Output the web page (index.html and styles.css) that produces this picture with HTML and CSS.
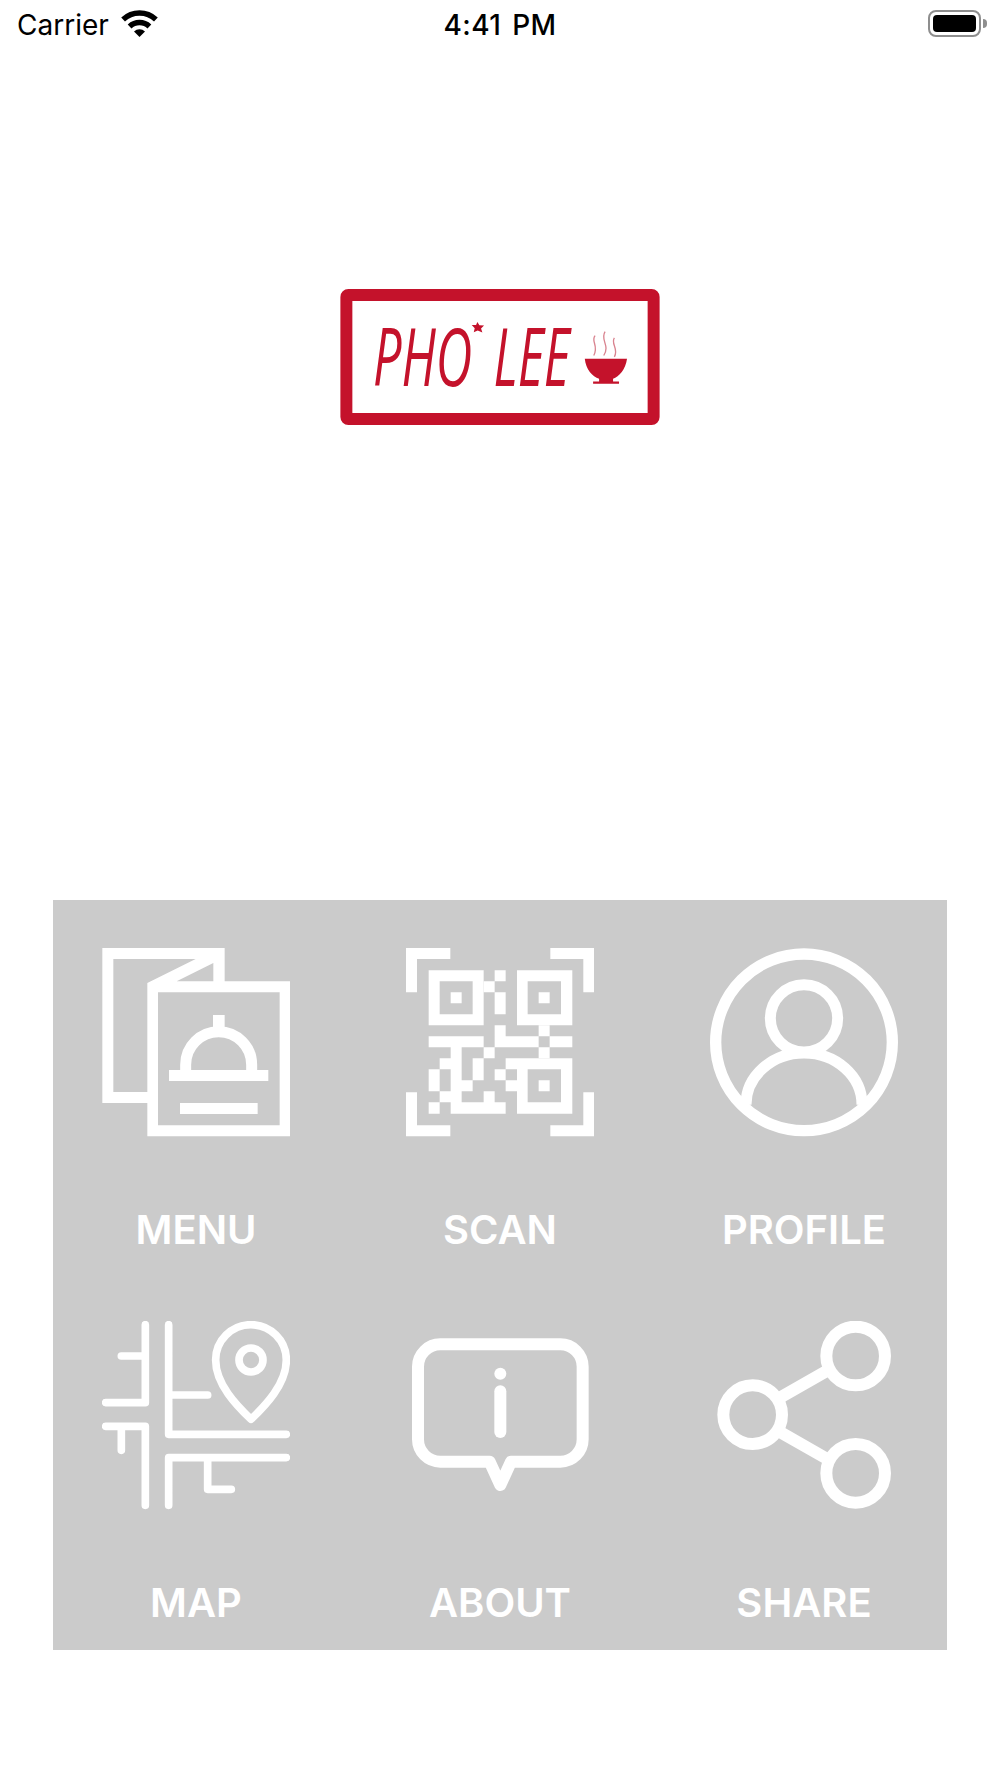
FILE: index.html
```html
<!DOCTYPE html>
<html lang="en">
<head>
<meta charset="utf-8">
<title>Pho Lee</title>
<link rel="stylesheet" href="styles.css">
</head>
<body>
<div class="page">
  <header class="status">
    <div class="status-left">
      <span class="carrier">Carrier</span>
      <svg class="wifi" viewBox="0 0 37 27"><path class="wifi-arc" d="M2.1 9.5A24 24 0 0 1 34.9 9.5"/><path class="wifi-arc" d="M8.6 16.4A14.5 14.5 0 0 1 28.4 16.4"/><path class="wifi-dot" d="M18.5 27L13 21.5A8 8 0 0 1 24 21.5Z"/></svg>
    </div>
    <span class="time">4:41 PM</span>
    <div class="battery"><div class="battery-body"><div class="battery-fill"></div></div><div class="battery-tip"></div></div>
  </header>

  <section class="hero">
    <svg class="logo" viewBox="60 58 960 409">
      <rect class="logo-frame" x="78" y="76" width="924" height="373" rx="6"/>
      <text class="logo-text" x="158" y="349" textLength="592" lengthAdjust="spacingAndGlyphs">PHO LEE</text>
      <path class="logo-fill" d="M472 157l6 10 14 1-9 9 4 12-14-6-12 5 3-12-9-10 13 0z"/>
      <path class="logo-fill" d="M795 268H922C918 300 898 322 880 328V336H898V343H820V336H838V328C818 322 798 300 795 268Z"/>
      <path class="logo-steam" d="M826 198C812 215 838 228 822 258M856 186C840 210 872 228 852 258M884 205C872 222 898 238 884 262"/>
    </svg>
  </section>

  <nav class="panel">
    <a class="tile">
      <svg class="icon" viewBox="64 55 566 566">
        <path class="solid" fill-rule="evenodd" d="M65 55H432V155H630V620H200V520H65ZM98 88H345L200 160V487H98ZM398 100V155H288ZM232 188H597V587H232Z"/>
        <path class="line" stroke-width="33" d="M315 421V405A99 99 0 0 1 513 405V421"/>
        <path class="solid" d="M397 256H432V300H397ZM265 421H563V454H265ZM298 520H531V553H298Z"/>
      </svg>
      <span class="label">MENU</span>
    </a>
    <a class="tile">
      <svg class="icon" viewBox="47 55 566 566">
        <path class="solid" d="M47 55H180V88H80V188H47ZM480 55H612V188H579V88H480ZM47 488H80V587H180V620H47ZM579 488H612V620H480V587H579Z"/>
        <path class="solid" fill-rule="evenodd" d="M115 122h165v165h-165zM148 155v99h99v-99zM181 188h33v33h-33zM380 122h166v165h-166zM412 155v99h100v-99zM445 188h33v33h-33zM380 386h166v166h-166zM412 419v99h100v-99zM445 452h33v33h-33z"/>
        <path class="solid" d="M313 122h33v33h-33zM280 155h33v33h-33zM313 188h33v66h-33zM313 287h33v33h-33zM445 287h33v33h-33zM115 320h165v33h-165zM313 320h132v33h-132zM478 320h68v33h-68zM181 353h33v33h-33zM280 353h33v33h-33zM445 353h33v33h-33zM148 386h66v33h-66zM247 386h33v33h-33zM346 386h34v33h-34zM115 419h33v33h-33zM181 419h33v33h-33zM247 419h33v33h-33zM313 419h33v33h-33zM115 452h33v33h-33zM181 452h66v33h-66zM346 452h34v33h-34zM148 485h66v33h-66zM280 485h33v33h-33zM115 518h33v34h-33zM181 518h165v34h-165z"/>
      </svg>
      <span class="label">SCAN</span>
    </a>
    <a class="tile">
      <svg class="icon" viewBox="60 55 566 566">
        <circle class="line" stroke-width="34" cx="342" cy="338" r="265"/>
        <circle class="line" stroke-width="33" cx="342" cy="266" r="101"/>
        <path class="line" stroke-width="33" d="M168 525A174 155 0 0 1 516 525"/>
      </svg>
      <span class="label">PROFILE</span>
    </a>
    <a class="tile">
      <svg class="icon" viewBox="35 65 566 566">
        <g class="round" stroke-width="23">
          <path d="M165 76V310H46M93 170H165M46 381H165V618M93 381V453M235 76V405H588M235 287H352M588 475H235V618M352 475V570H423"/>
          <path d="M482 360C440 320 376 255 376 182A106 106 0 0 1 588 182C588 255 524 320 482 360Z"/>
          <circle cx="482" cy="182" r="36"/>
        </g>
      </svg>
      <span class="label">MAP</span>
    </a>
    <a class="tile">
      <svg class="icon" viewBox="47 65 566 566">
        <g class="round" stroke-width="36">
          <path d="M150 135H510A67 67 0 0 1 577 202V420A67 67 0 0 1 510 487H362L330 557L298 487H150A67 67 0 0 1 83 420V202A67 67 0 0 1 150 135Z"/>
          <path d="M330 276V398"/>
        </g>
        <circle class="solid" cx="330" cy="223" r="18"/>
      </svg>
      <span class="label">ABOUT</span>
    </a>
    <a class="tile">
      <svg class="icon" viewBox="60 65 566 566">
        <g class="round" stroke-width="36">
          <circle cx="497" cy="170" r="88"/>
          <circle cx="188" cy="346" r="88"/>
          <circle cx="497" cy="522" r="88"/>
        </g>
        <path class="line" stroke-width="36" d="M268 296L410 215M270 398L410 478"/>
      </svg>
      <span class="label">SHARE</span>
    </a>
  </nav>
</div>
</body>
</html>
```
FILE: styles.css
```css
* { box-sizing: border-box; }
html, body { margin: 0; padding: 0; background: #fff; }
.page {
  width: 1000px;
  height: 1778px;
  display: flex;
  flex-direction: column;
  font-family: Inter, "Liberation Sans", sans-serif;
}
.status {
  height: 48px;
  display: grid;
  grid-template-columns: 1fr auto 1fr;
  grid-template-rows: 48px;
  align-items: start;
  padding: 0 13px;
  color: #000;
}
.status-left { display: flex; align-items: flex-start; gap: 12px; padding-left: 4px; }
.carrier { font-size: 28px; font-weight: 400; line-height: 46px; padding-top: 2px; }
.wifi { width: 37px; height: 27px; display: block; margin-top: 10px; }
.wifi-arc { fill: none; stroke: #000; stroke-width: 5.5; }
.wifi-dot { fill: #000; }
.time { font-size: 28px; font-weight: 500; line-height: 46px; padding-top: 2px; word-spacing: 3px; letter-spacing: 0.4px; }
.battery { justify-self: end; display: flex; align-items: center; gap: 2px; margin-top: 10px; }
.battery-body {
  width: 53px;
  height: 27px;
  border: 2px solid #8e8e8e;
  border-radius: 8px;
  padding: 3px;
}
.battery-fill { width: 100%; height: 100%; background: #000; border-radius: 4px; }
.battery-tip { width: 4px; height: 9px; background: #8e8e8e; border-radius: 0 4px 4px 0; }

.hero {
  height: 852px;
  padding-top: 241px;
  display: flex;
  justify-content: center;
  align-items: flex-start;
}
.logo { width: 320px; height: 136px; display: block; filter: blur(0.5px); }
.logo-frame { fill: #fff; stroke: #c4122b; stroke-width: 36; }
.logo-text {
  font-family: "Open Sans", "Liberation Sans", sans-serif;
  font-style: italic;
  font-weight: 400;
  font-size: 240px;
  word-spacing: 40px;
  fill: #c4122b;
}
.logo-fill { fill: #c4122b; }
.logo-steam { fill: none; stroke: #d9838f; stroke-width: 4; }

.panel {
  width: 894px;
  height: 750px;
  margin-left: 53px;
  padding-top: 48px;
  background: #cbcbcb;
  display: grid;
  grid-template-columns: repeat(3, 286px);
  grid-auto-rows: 373.4px;
  column-gap: 18px;
}
.tile { display: flex; flex-direction: column; align-items: center; }
.icon { width: 188.67px; height: 188.67px; display: block; }
.solid { fill: #fff; }
.line { fill: none; stroke: #fff; }
.round { fill: none; stroke: #fff; stroke-linecap: round; stroke-linejoin: round; }
.label {
  margin-top: 69px;
  font-size: 40px;
  font-weight: 600;
  line-height: 48px;
  color: #fff;
}
```
